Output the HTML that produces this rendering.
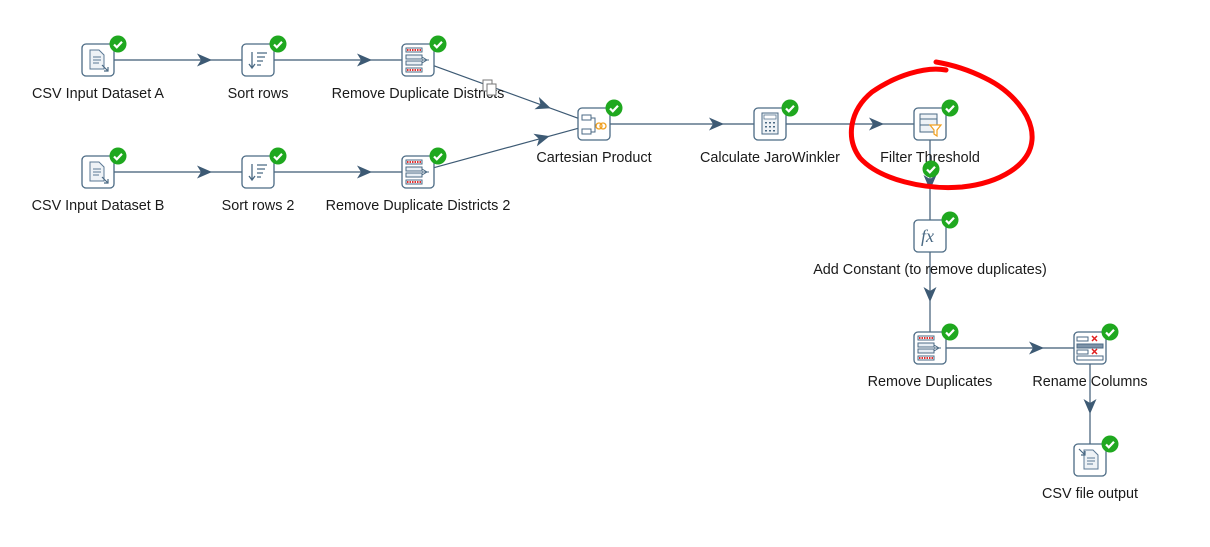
<!DOCTYPE html>
<html><head><meta charset="utf-8"><style>
html,body{margin:0;padding:0;background:#fff;width:1210px;height:547px;overflow:hidden}
svg{display:block}
text{font-family:"Liberation Sans","DejaVu Sans",sans-serif;font-size:14.4px;fill:#1a1a1a}
</style></head><body>
<svg id="s" width="1210" height="547" viewBox="0 0 1210 547" xmlns="http://www.w3.org/2000/svg">
<defs>
<g id="chk"><circle r="8.5" fill="#1fa81f"/><path d="M-4,0.5 L-1.2,3.3 L4,-2.2" stroke="#fff" stroke-width="2.2" fill="none"/></g>
<g id="box"><rect x="-16" y="-16" width="32" height="32" rx="4" fill="#fff" stroke="#4b6a84" stroke-width="1.3"/></g>
</defs>
<g id="edges" stroke="#3d5a74" stroke-width="1.2" fill="#3d5a74"></g>
<g id="nodes"></g>
<path d="M946,70 C925,66 895,76 872,92 C850,110 845,138 860,158 C880,180 925,190 962,187 C1000,183 1030,165 1032,140 C1034,115 1010,90 985,78 C965,68 948,64 936,62" stroke="#f00" stroke-width="5" fill="none" stroke-linecap="round"/>
<g transform="translate(483,80)" stroke="#777" fill="#fff" stroke-width="1"><rect x="0" y="0" width="9" height="11"/><rect x="4" y="4" width="9" height="11"/></g>
</svg>
<script>
const N={A:[98,60,'CSV Input Dataset A','in'],S1:[258,60,'Sort rows','sort'],R1:[418,60,'Remove Duplicate Districts','dup'],
B:[98,172,'CSV Input Dataset B','in'],S2:[258,172,'Sort rows 2','sort'],R2:[418,172,'Remove Duplicate Districts 2','dup'],
C:[594,124,'Cartesian Product','cart'],J:[770,124,'Calculate JaroWinkler','calc'],F:[930,124,'Filter Threshold','filt'],
K:[930,236,'Add Constant (to remove duplicates)','fx'],D:[930,348,'Remove Duplicates','dup'],N:[1090,348,'Rename Columns','ren'],O:[1090,460,'CSV file output','out']};
const E=[['A','S1'],['S1','R1'],['B','S2'],['S2','R2'],['R1','C'],['R2','C'],['C','J'],['J','F'],['F','K'],['K','D'],['D','N'],['N','O']];
let e='',n='';
for(const [a,b] of E){const [x1,y1]=N[a],[x2,y2]=N[b];const dx=x2-x1,dy=y2-y1,L=Math.hypot(dx,dy),ux=dx/L,uy=dy/L;
e+=`<line x1="${x1+ux*16}" y1="${y1+uy*16}" x2="${x2-ux*16}" y2="${y2-uy*16}"/>`;
const tx=x2-ux*46,ty=y2-uy*46,bx=tx-ux*15,by=ty-uy*15,px=-uy*6.5,py=ux*6.5;
e+=`<path stroke="none" d="M${tx},${ty} L${bx+px},${by+py} L${bx+ux*4},${by+uy*4} L${bx-px},${by-py}Z"/>`;}
function icon(t){const s='#4b6a84',l='#5b7894';
switch(t){
case 'in':return `<path d="M-8,-10 h9 l5,5 v14 h-14z" fill="#eef2f6" stroke="${l}"/><path d="M-5,-3h8M-5,0h8M-5,3h6" stroke="${l}"/><path d="M4,5 l6,6 M10,7v4h-4" stroke="${s}" fill="none" stroke-width="1.2"/>`;
case 'out':return `<path d="M-6,-10 h9 l5,5 v14 h-14z" fill="#eef2f6" stroke="${l}"/><path d="M-3,-2h8M-3,1h8M-3,4h6" stroke="${l}"/><path d="M-11,-11 l6,6 M-5,-9v4h-4" stroke="${s}" fill="none" stroke-width="1.2"/>`;
case 'sort':return `<path d="M-6,-8v15M-9,4l3,4l3,-4" stroke="${s}" fill="none" stroke-width="1.3"/><path d="M-1,-7h10M-1,-3h8M-1,1h6M-1,5h4" stroke="${s}" stroke-width="1.3"/>`;
case 'dup':return `<g stroke="${s}" stroke-width="1"><rect x="-12" y="-12" width="16" height="4" fill="#fff"/><rect x="-12" y="-5" width="16" height="4" fill="#e8eef4"/><rect x="-12" y="1" width="16" height="4" fill="#e8eef4"/><rect x="-12" y="8" width="16" height="4" fill="#fff"/></g><path d="M-11,-10h14M-11,10h14" stroke="#e03030" stroke-dasharray="1.5 1" stroke-width="2"/><path d="M4,-3 l5,3 l-5,3 M4,0h7" stroke="${s}" fill="none"/>`;
case 'cart':return `<rect x="-12" y="-9" width="9" height="5" fill="#fff" stroke="${s}"/><rect x="-12" y="5" width="9" height="5" fill="#fff" stroke="${s}"/><path d="M-3,-6h4v14h-4M1,1h2" stroke="${s}" fill="none"/><circle cx="5" cy="2" r="3" fill="none" stroke="#f0a020" stroke-width="1.3"/><circle cx="9" cy="2" r="3" fill="none" stroke="#f0a020" stroke-width="1.3"/>`;
case 'calc':return `<rect x="-8" y="-11" width="16" height="21" fill="#eef2f6" stroke="${s}"/><rect x="-6" y="-9" width="12" height="4" fill="#fff" stroke="${s}" stroke-width=".7"/><g fill="${s}"><rect x="-5" y="-2" width="2" height="1.5"/><rect x="-1" y="-2" width="2" height="1.5"/><rect x="3" y="-2" width="2" height="1.5"/><rect x="-5" y="2" width="2" height="1.5"/><rect x="-1" y="2" width="2" height="1.5"/><rect x="3" y="2" width="2" height="1.5"/><rect x="-5" y="6" width="2" height="1.5"/><rect x="-1" y="6" width="2" height="1.5"/><rect x="3" y="6" width="2" height="1.5"/></g>`;
case 'filt':return `<rect x="-10" y="-10" width="17" height="18" fill="#eef2f6" stroke="${s}"/><path d="M-10,-5h17M-10,1h17" stroke="${s}"/><path d="M0,1 h11 l-4,5 v6 l-3,-2 v-4z" fill="#fff" stroke="#f0a020" stroke-width="1.2"/>`;
case 'fx':return `<text x="-9" y="6" style="font-family:'Liberation Serif',serif;font-style:italic;font-size:18px;fill:#4b6a84">fx</text>`;
case 'ren':return `<g stroke="${s}" fill="#fff"><rect x="-13" y="-11" width="11" height="4"/><rect x="-13" y="-4" width="26" height="4" fill="#7d93a8"/><rect x="-13" y="2" width="11" height="4"/><rect x="-13" y="8" width="26" height="4"/></g><path d="M2,-12l5,5M7,-12l-5,5M2,1l5,5M7,1l-5,5" stroke="#e02020" stroke-width="1.5"/>`;}}
for(const k in N){const [x,y,l,t]=N[k];
n+=`<g transform="translate(${x},${y})"><use href="#box"/>${icon(t)}<use href="#chk" transform="translate(20,-16)"/></g>`;
n+=`<text x="${x}" y="${y+38}" text-anchor="middle">${l}</text>`;}
n+=`<use href="#chk" transform="translate(931,169)"/>`;
document.getElementById('edges').innerHTML=e;
document.getElementById('nodes').innerHTML=n;
</script>
</body></html>
